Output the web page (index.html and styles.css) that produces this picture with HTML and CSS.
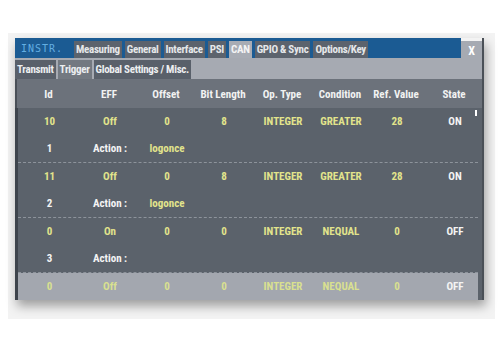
FILE: index.html
```html
<!DOCTYPE html>
<html lang="en">
<head>
    <meta charset="UTF-8">
    <title>CAN Trigger</title>
    <link rel="stylesheet" href="styles.css">
</head>
<body>
<div class="frame">
    <div class="window">
        <div class="topbar">
            <div class="brand">INSTR.</div>
            <ul class="tabs">
                <li>Measuring</li>
                <li>General</li>
                <li>Interface</li>
                <li>PSI</li>
                <li class="on">CAN</li>
                <li>GPIO &amp; Sync</li>
                <li>Options/Key</li>
            </ul>
            <div class="close">X</div>
        </div>
        <div class="subbar">
            <ul class="subtabs">
                <li>Transmit</li>
                <li class="on">Trigger</li>
                <li>Global Settings / Misc.</li>
            </ul>
        </div>
        <div class="head row">
            <span>Id</span><span>EFF</span><span>Offset</span><span>Bit Length</span>
            <span>Op. Type</span><span>Condition</span><span>Ref. Value</span><span>State</span>
        </div>
        <div class="body">
            <div class="rec">
                <div class="row val">
                    <span>10</span><span>Off</span><span>0</span><span>8</span>
                    <span>INTEGER</span><span>GREATER</span><span>28</span><span class="w">ON</span>
                </div>
                <div class="row act">
                    <span class="w">1</span><span class="w">Action :</span><span>logonce</span>
                </div>
            </div>
            <div class="rec">
                <div class="row val">
                    <span>11</span><span>Off</span><span>0</span><span>8</span>
                    <span>INTEGER</span><span>GREATER</span><span>28</span><span class="w">ON</span>
                </div>
                <div class="row act">
                    <span class="w">2</span><span class="w">Action :</span><span>logonce</span>
                </div>
            </div>
            <div class="rec">
                <div class="row val">
                    <span>0</span><span>On</span><span>0</span><span>0</span>
                    <span>INTEGER</span><span>NEQUAL</span><span>0</span><span class="w">OFF</span>
                </div>
                <div class="row act">
                    <span class="w">3</span><span class="w">Action :</span><span></span>
                </div>
            </div>
            <div class="row val sel">
                <span>0</span><span>Off</span><span>0</span><span>0</span>
                <span>INTEGER</span><span>NEQUAL</span><span>0</span><span class="w">OFF</span>
            </div>
            <i class="thumb"></i>
        </div>
    </div>
</div>
</body>
</html>
```

FILE: styles.css
```css
* {
    margin: 0;
    padding: 0;
    box-sizing: border-box;
}
ul {
    list-style: none;
}
body {
    background: #fff;
    font-family: "Liberation Sans Narrow", "Roboto Condensed", "Liberation Sans", sans-serif;
    font-weight: bold;
    font-size: 11px;
}
.frame {
    margin: 33px 5px 19px 8px;
    padding: 5px 11px 19px 7px;
    background: #f3f3f3;
}
.window {
    width: 469px;
    background: #a6aab2;
    border-right: 2px solid #4a5057;
    box-shadow: 2px 6px 10px rgba(0, 0, 0, 0.35);
}
.topbar {
    display: flex;
    height: 20px;
    background: #f3f3f3;
}
.brand {
    width: 56px;
    background: #1b5b93;
    color: #63aee2;
    font-family: "DejaVu Sans Mono", monospace;
    font-weight: normal;
    font-size: 10px;
    letter-spacing: 1px;
    padding: 5px 0 0 6px;
}
.tabs {
    flex: 1;
    display: flex;
    gap: 3px;
    background: #1b5b93;
    padding: 3px 0 0 3px;
}
.tabs li {
    background: #5c636d;
    color: #e6e8ea;
    padding: 2px 2px 0;
    letter-spacing: -0.3px;
}
.tabs .on {
    background: #a8acb4;
    color: #f4f4f4;
}
.close {
    width: 21px;
    margin-top: 3px;
    background: #a6aab2;
    color: #fff;
    text-align: center;
    font-size: 12px;
    padding-top: 3px;
}
.subbar {
    height: 21px;
    padding-top: 2px;
}
.subtabs {
    display: flex;
    gap: 2px;
}
.subtabs li {
    background: #59606a;
    color: #eceef0;
    padding: 3px 2px 0;
    height: 19px;
    letter-spacing: -0.3px;
}
.subtabs .on {
    background: #737981;
}
.row {
    display: grid;
    grid-template-columns: 63px 58px 56px 58px 60px 56px 56px 60px;
    align-items: center;
    text-align: center;
}
.head {
    height: 29px;
    background: #6c727b;
    color: #f2f2f2;
    padding-top: 1px;
    border-left: 2px solid #4a5058;
}
.body {
    position: relative;
    padding-right: 4px;
    background: #5b626b;
    border-left: 3px solid #3e444c;
}
.rec {
    border-bottom: 1px dashed #8d939b;
}
.val, .act {
    height: 27px;
    color: #e2e48c;
}
.w {
    color: #f4f4f4;
}
.sel {
    background: #a3a7af;
    color: #d9e08f;
}
.thumb {
    position: absolute;
    right: 5px;
    top: 2px;
    width: 2px;
    height: 6px;
    background: #fff;
}
```
